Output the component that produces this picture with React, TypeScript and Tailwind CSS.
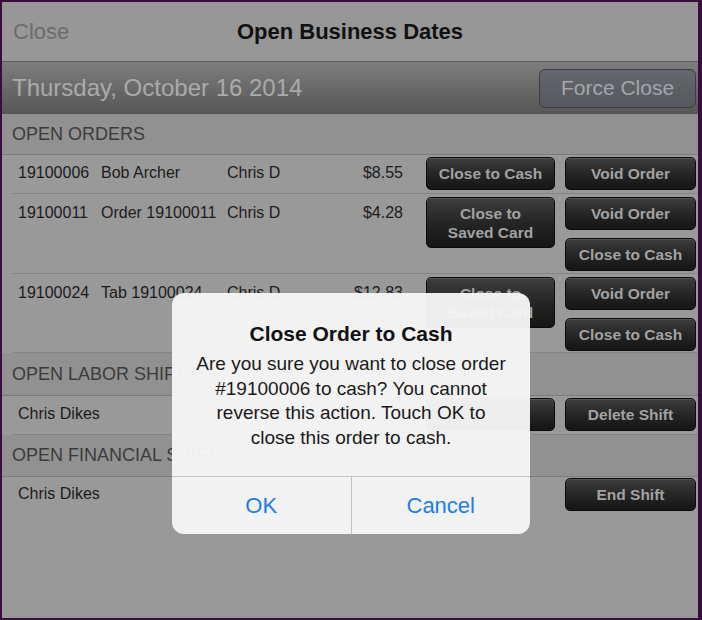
import React from "react";

type Btn = { label: React.ReactNode; tall?: boolean };

function DarkButton({ label, tall }: Btn) {
  return (
    <div
      className={`flex items-center justify-center rounded-[5px] border border-[#0c0c0c] bg-linear-to-b from-[#3e3e3e] via-[#262626] to-[#151515] text-center text-[15.5px] font-bold leading-[19px] text-[#a2a2a2] shadow-[inset_0_1px_0_rgba(255,255,255,0.12)] ${
        tall ? "h-[51px]" : "h-[33px]"
      }`}
    >
      {label}
    </div>
  );
}

type Row = {
  num?: string;
  name: string;
  server?: string;
  amount?: string;
  col1?: Btn[];
  col2: Btn[];
  pad: string;
  border?: boolean;
};

function OrderRow({ num, name, server, amount, col1 = [], col2, pad, border = true }: Row) {
  return (
    <div className={`ml-[10px] flex items-start pl-[6px] pr-[2px] ${pad} ${border ? "border-b border-[#848484]" : ""}`}>
      {num !== undefined && <div className="w-[83px] text-[16px] leading-[31px] text-[#1c1c1c]">{num}</div>}
      <div className={`${num !== undefined ? "w-[126px]" : "w-[209px]"} text-[16px] leading-[31px] text-[#1c1c1c]`}>{name}</div>
      <div className="w-[100px] text-[16px] leading-[31px] text-[#1c1c1c]">{server}</div>
      <div className="w-[76px] text-right text-[16px] leading-[31px] text-[#1c1c1c]">{amount}</div>
      <div className="ml-[23px] flex w-[129px] flex-col gap-[8px]">
        {col1.map((b, i) => (
          <DarkButton key={i} {...b} />
        ))}
      </div>
      <div className="ml-[10px] flex w-[131px] flex-col gap-[8px]">
        {col2.map((b, i) => (
          <DarkButton key={i} {...b} />
        ))}
      </div>
    </div>
  );
}

function SectionHeader({ title, h }: { title: string; h: string }) {
  return (
    <div className={`flex items-center border-b border-[#7b7b7b] bg-[#919191] pl-[10px] text-[18px] text-[#3c3c3c] ${h}`}>
      {title}
    </div>
  );
}

const savedCard = (
  <>
    Close to
    <br />
    Saved Card
  </>
);

export default function App() {
  return (
    <div className="relative h-[620px] w-[702px] overflow-hidden border-t-2 border-b-2 border-l-2 border-r-4 border-[#3e0a42] bg-[#999999] font-['Liberation_Sans',Arial,sans-serif]">
      {/* nav bar */}
      <div className="relative flex h-[60px] items-center border-b border-[#5c5c5c] bg-[#979797]">
        <span className="pl-[11px] text-[22px] text-[#6c6c6c]">Close</span>
        <span className="absolute inset-x-0 text-center text-[22px] font-bold text-[#111111]">Open Business Dates</span>
      </div>

      {/* date bar */}
      <div className="flex h-[52px] items-center justify-between bg-linear-to-b from-[#7e7e7e] to-[#565656] pl-[10px] pr-[2px]">
        <span className="text-[24px] text-[#aaaaaa]">Thursday, October 16 2014</span>
        <div className="flex h-[39px] w-[157px] items-center justify-center rounded-[6px] border border-[#3c3e41] bg-linear-to-b from-[#64686d] to-[#55595e] text-[21px] text-[#a3a7ab]">
          Force Close
        </div>
      </div>

      <SectionHeader title="OPEN ORDERS" h="h-[41px]" />
      <OrderRow
        num="19100006"
        name="Bob Archer"
        server="Chris D"
        amount="$8.55"
        col1={[{ label: "Close to Cash" }]}
        col2={[{ label: "Void Order" }]}
        pad="pt-[2px] pb-[3px]"
      />
      <OrderRow
        num="19100011"
        name="Order 19100011"
        server="Chris D"
        amount="$4.28"
        col1={[{ label: savedCard, tall: true }]}
        col2={[{ label: "Void Order" }, { label: "Close to Cash" }]}
        pad="pt-[3px] pb-[2px]"
      />
      <OrderRow
        num="19100024"
        name="Tab 19100024"
        server="Chris D"
        amount="$12.83"
        col1={[{ label: savedCard, tall: true }]}
        col2={[{ label: "Void Order" }, { label: "Close to Cash" }]}
        pad="pt-[3px] pb-[1px]"
      />

      <SectionHeader title="OPEN LABOR SHIFTS" h="h-[43px]" />
      <OrderRow
        name="Chris Dikes"
        col1={[{ label: "" }]}
        col2={[{ label: "Delete Shift" }]}
        pad="pt-[2px] pb-[3px]"
      />

      <SectionHeader title="OPEN FINANCIAL SHIFTS" h="h-[42px]" />
      <OrderRow
        name="Chris Dikes"
        col2={[{ label: "End Shift" }]}
        pad="pt-[1px] pb-[3px]"
        border={false}
      />

      {/* alert */}
      <div className="absolute left-[170px] top-[291px] flex h-[241px] w-[358px] flex-col overflow-hidden rounded-[12px] bg-[rgba(245,245,245,0.97)]">
        <div className="pt-[28px] text-center text-[21px] font-bold leading-[26px] text-[#111111]">Close Order to Cash</div>
        <div className="mt-[5px] text-center text-[19px] leading-[24.5px] text-[#1a1a1a]">
          Are you sure you want to close order
          <br />
          #19100006 to cash? You cannot
          <br />
          reverse this action. Touch OK to
          <br />
          close this order to cash.
        </div>
        <div className="mt-auto flex h-[58px] border-t border-[#c2c2c2]">
          <div className="flex flex-1 items-center justify-center border-r border-[#c2c2c2] text-[22px] text-[#1b7de6]">OK</div>
          <div className="flex flex-1 items-center justify-center text-[22px] text-[#1b7de6]">Cancel</div>
        </div>
      </div>
    </div>
  );
}
